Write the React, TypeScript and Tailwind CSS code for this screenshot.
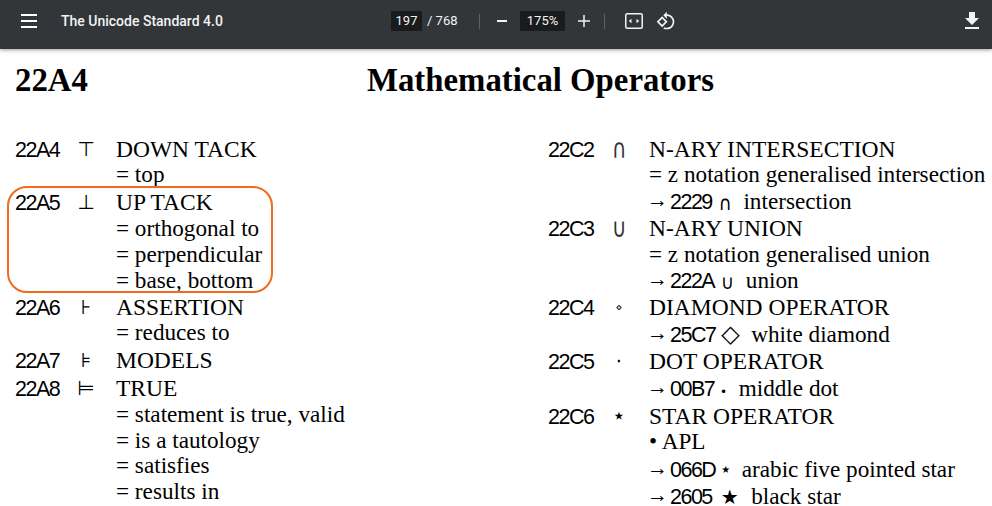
import React from "react";

const S = ({ children }: { children: React.ReactNode }) => (
  <span className="font-['Liberation_Sans',sans-serif] text-[21.5px] tracking-[-1.5px] leading-none">{children}</span>
);
const Arrow = () => <span className="font-['Liberation_Serif',serif] text-[21px] inline-block -ml-[2px] mr-[2px] -translate-y-[2px] leading-none">→</span>;
const G = ({ children, cls }: { children: React.ReactNode; cls: string }) => (
  <span className={`font-['DejaVu_Sans',sans-serif] leading-none inline-block ${cls}`}>{children}</span>
);

type Line = [React.ReactNode, string];

const Entry = ({ code, sym, symCls, lines, cls = "" }: { code: string; sym: string; symCls: string; lines: Line[]; cls?: string }) => (
  <div className={`flex ${cls}`}>
    <div className="w-[47px] h-[26px] pt-[2px] flex items-center font-['Liberation_Sans',sans-serif] text-[21.5px] tracking-[-1.5px] whitespace-nowrap">{code}</div>
    <div className="w-[48px] h-[26px] flex items-center justify-center">
      <span className={`font-['DejaVu_Sans',sans-serif] leading-none inline-block ${symCls}`}>{sym}</span>
    </div>
    <div className="ml-[6px] flex flex-col">
      {lines.map((l, i) => (
        <div key={i} className={`h-[26px] whitespace-pre font-['Liberation_Serif',serif] text-[23.2px] leading-[26px] ${l[1]}`}>
          <span>{l[0]}</span>
        </div>
      ))}
    </div>
  </div>
);

const Icon = ({ d, cls }: { d: string; cls: string }) => (
  <svg viewBox="0 0 24 24" className={cls} fill="currentColor"><path d={d} /></svg>
);

const CAPS = "text-[23.5px]";

export default function App() {
  return (
    <div className="w-[992px] h-[506px] overflow-hidden bg-white relative text-black">
      <header className="relative z-10 h-[49px] pb-[7px] bg-[#323639] shadow-[0_1px_4px_rgba(0,0,0,0.4)] flex items-center text-[#f1f3f4] font-['Roboto',sans-serif]">
        <Icon cls="ml-[17px] w-[24px] h-[24px] text-white" d="M4 5h16v2H4zM4 11h16v2H4zM4 17h16v2H4z" />
        <div className="ml-[20px] w-[330px] text-[14px] font-medium text-[#f1f3f4] whitespace-nowrap">The Unicode Standard 4.0</div>
        <div className="w-[31px] h-[20px] bg-[#191b1c] text-[13px] flex items-center justify-center">197</div>
        <div className="ml-[5px] w-[52px] text-[13px] whitespace-pre">/ 768</div>
        <div className="w-px h-[15px] bg-[#5f6368]" />
        <div className="ml-[17px] w-[10px] h-[2px] bg-[#f1f3f4]" />
        <div className="ml-[13px] w-[45px] h-[20px] bg-[#191b1c] text-[13px] flex items-center justify-center">175%</div>
        <Icon cls="ml-[10px] w-[18px] h-[18px]" d="M20 13h-7v7h-2v-7H4v-2h7V4h2v7h7z" />
        <div className="ml-[11px] w-px h-[15px] bg-[#5f6368]" />
        <svg viewBox="0 0 18 16" className="ml-[20px] w-[18px] h-[16px]" fill="none">
          <rect x="0.75" y="0.75" width="16.5" height="14.5" rx="1.5" stroke="#f1f3f4" strokeWidth="1.5" />
          <path d="M6.5 5.8v4.4L3.8 8zM11.5 5.8v4.4L14.2 8z" fill="#f1f3f4" />
        </svg>
        <Icon cls="ml-[13px] w-[20px] h-[20px]" d="M7.34 6.41L.86 12.9l6.49 6.48 6.49-6.48-6.5-6.49zM3.69 12.9l3.66-3.66L11 12.9l-3.66 3.66-3.65-3.66zm15.67-6.26C17.61 4.88 15.3 4 13 4V.76L8.76 5 13 9.24V6c1.79 0 3.58.68 4.95 2.05 2.73 2.73 2.73 7.17 0 9.9C16.58 19.32 14.79 20 13 20c-.97 0-1.94-.21-2.84-.61l-1.49 1.49C10.02 21.62 11.51 22 13 22c2.3 0 4.61-.88 6.36-2.64 3.52-3.51 3.52-9.21 0-12.72z" />
        <Icon cls="ml-auto mr-[8px] w-[24px] h-[24px]" d="M19 9h-4V3H9v6H5l7 7 7-7zM5 18v2h14v-2H5z" />
      </header>

      <main className="pl-[15px]">
        <div className="h-[87px] pt-[11px] flex font-['Liberation_Serif',serif] font-bold text-[32.8px] leading-[40px]">
          <div className="w-[352px]">22A4</div>
          <div className="whitespace-nowrap">Mathematical Operators</div>
        </div>
        <div className="flex">
          <div className="w-[533px] shrink-0">
            <Entry code="22A4" sym="⊤" symCls="text-[20px]" lines={[["DOWN TACK", CAPS], ["= top", "-mt-px mb-px"]]} />
            <Entry cls="mt-px" code="22A5" sym="⊥" symCls="text-[20px]" lines={[["UP TACK", CAPS], ["= orthogonal to", ""], ["= perpendicular", ""], ["= base, bottom", ""]]} />
            <Entry cls="mt-px" code="22A6" sym="⊦" symCls="text-[20px]" lines={[["ASSERTION", CAPS], ["= reduces to", "-mt-px mb-px"]]} />
            <Entry cls="mt-px" code="22A7" sym="⊧" symCls="text-[20px]" lines={[["MODELS", CAPS]]} />
            <Entry cls="mt-[2px]" code="22A8" sym="⊨" symCls="text-[20px]" lines={[["TRUE", CAPS], ["= statement is true, valid", ""], ["= is a tautology", ""], ["= satisfies", "-mt-px"], ["= results in", ""]]} />
          </div>
          <div className="flex-1">
            <Entry code="22C2" sym="∩" symCls="text-[20px] scale-y-[1.35] text-[#333]" lines={[["N-ARY INTERSECTION", CAPS], ["= z notation generalised intersection", "-mt-px mb-px"], [<><Arrow /><S>2229</S> <G cls="text-[18px] scale-y-[1.1] ml-px">∩</G>{"  intersection"}</>, ""]]} />
            <Entry cls="mt-px" code="22C3" sym="∪" symCls="text-[20px] scale-y-[1.35] text-[#333]" lines={[["N-ARY UNION", CAPS], ["= z notation generalised union", ""], [<><Arrow /><S>222A</S> <G cls="text-[18px] scale-y-[1.1] ml-px">∪</G>{"  union"}</>, ""]]} />
            <Entry cls="mt-px" code="22C4" sym="⋄" symCls="text-[11px]" lines={[["DIAMOND OPERATOR", CAPS], [<><Arrow /><S>25C7</S> <G cls="text-[24px]">◇</G>{"  white diamond"}</>, "mt-px"]]} />
            <Entry cls="mt-px" code="22C5" sym="⋅" symCls="text-[20px]" lines={[["DOT OPERATOR", CAPS], [<><Arrow /><S>00B7</S> <G cls="text-[12px]">•</G>{"  middle dot"}</>, "mt-px"]]} />
            <Entry cls="mt-[2px]" code="22C6" sym="⋆" symCls="text-[22px]" lines={[["STAR OPERATOR", CAPS], ["• APL", "-mt-px"], [<><Arrow /><S>066D</S> <G cls="text-[10px] -translate-y-[4px]">★</G>{"  arabic five pointed star"}</>, "mt-[2px]"], [<><Arrow /><S>2605</S> <G cls="text-[20px] ml-[3px] mr-px">★</G>{"  black star"}</>, "mt-px"]]} />
          </div>
        </div>
      </main>
      <div className="absolute left-[7px] top-[186px] w-[266px] h-[107px] border-2 border-[#ee6c1c] rounded-[20px]" />
    </div>
  );
}
